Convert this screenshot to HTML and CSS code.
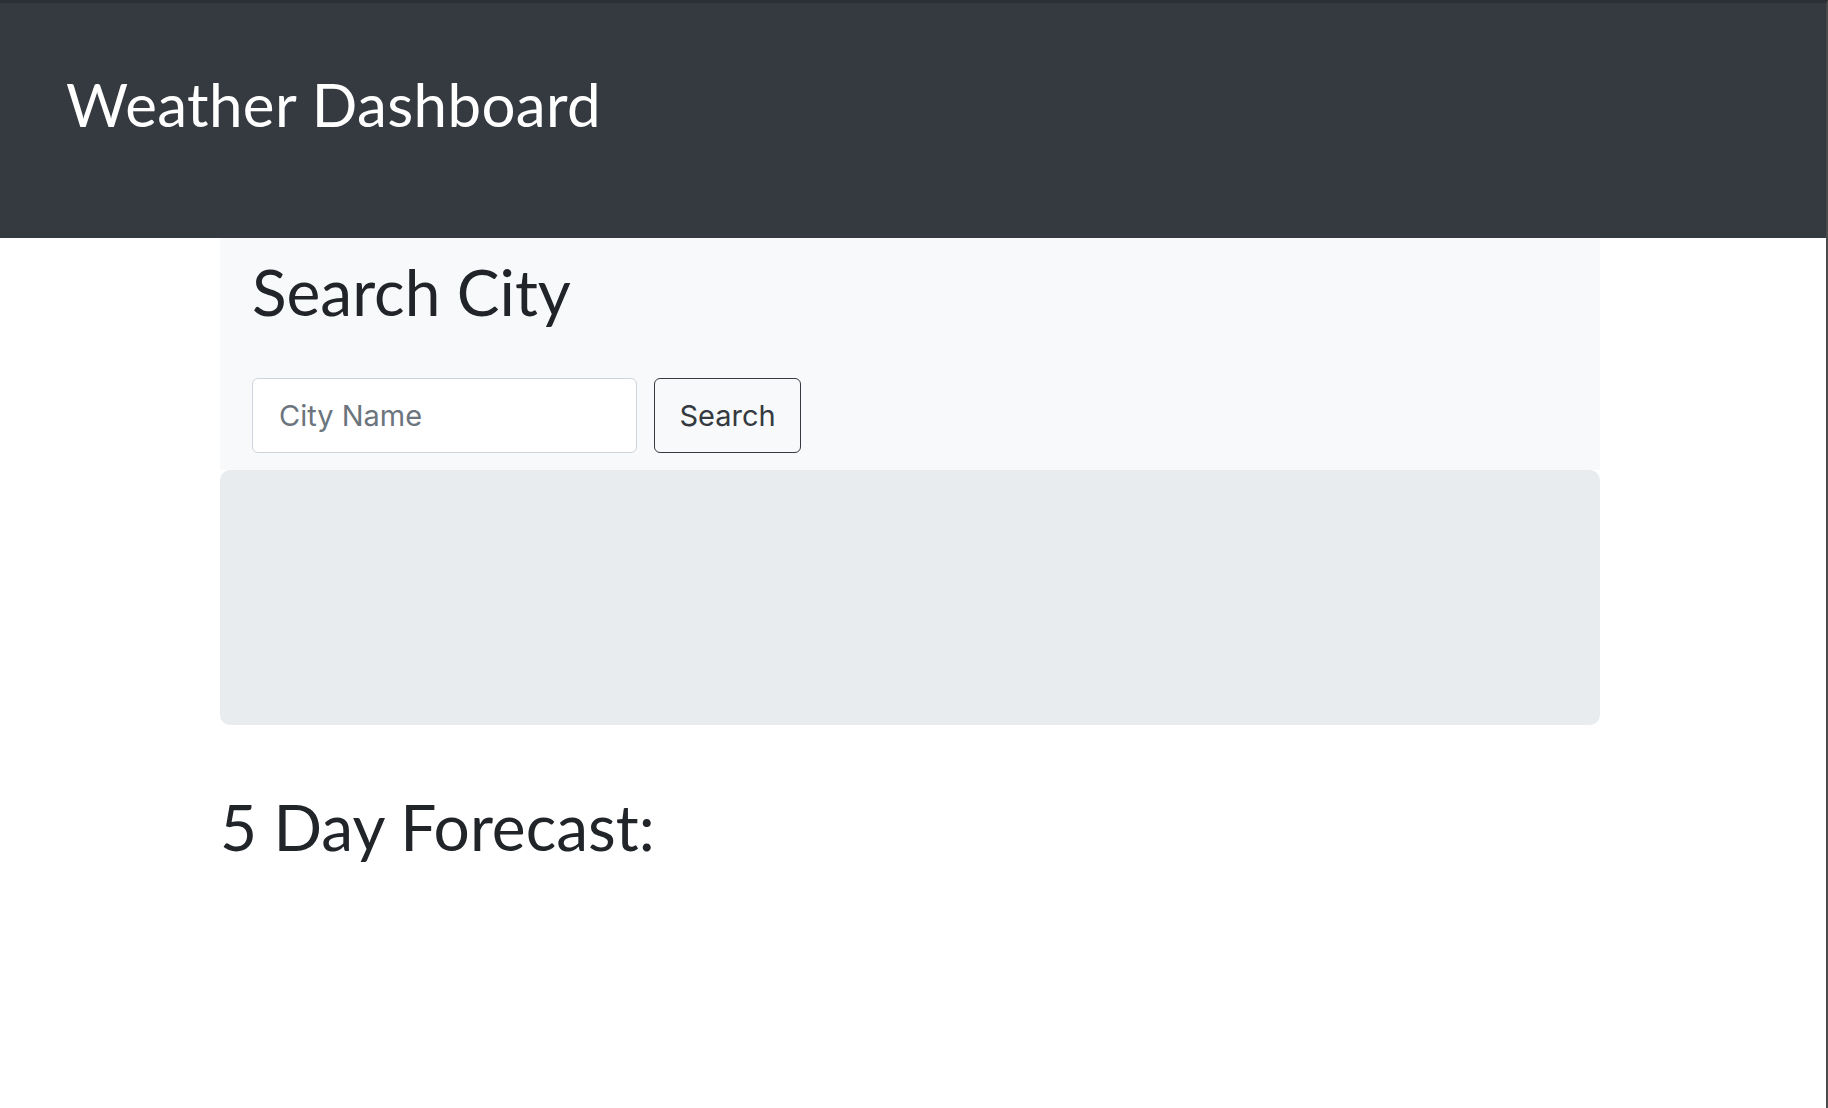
FILE: index.html
```html
<!DOCTYPE html>
<html lang="en">
<head>
<meta charset="utf-8">
<title>Weather Dashboard</title>
<link rel="stylesheet" href="styles.css">
</head>
<body>
<div class="frame">
  <header class="jumbo">
    <h1 class="brand">Weather Dashboard</h1>
  </header>
  <main class="container">
    <section class="search-panel">
      <h2 class="panel-title">Search City</h2>
      <form class="search-form">
        <input class="city-input" type="text" placeholder="City Name">
        <button class="search-btn" type="button">Search</button>
      </form>
    </section>
    <section class="current-box"></section>
    <h2 class="forecast-title">5 Day Forecast:</h2>
  </main>
</div>
</body>
</html>
```

FILE: styles.css
```css
html, body {
  margin: 0;
  padding: 0;
  background: #ffffff;
}

body {
  font-family: Lato, "Liberation Sans", sans-serif;
  color: #212529;
}

.frame {
  box-sizing: border-box;
  min-height: 100vh;
  border-top: 3px solid #2b2f33;
  border-right: 2px solid #4a4a4a;
}

.jumbo {
  background: #343a40;
  height: 235px;
  box-sizing: border-box;
  padding: 65px 0 0 66px;
}

.brand {
  margin: 0;
  font-weight: 400;
  font-size: 60px;
  letter-spacing: 0.4px;
  line-height: 1.2;
  color: #ffffff;
}

.container {
  width: 1380px;
  margin-left: 220px;
}

.search-panel {
  background: #f8f9fa;
  padding: 16px 32px 17px;
}

.panel-title {
  margin: 0 0 47px;
  font-weight: 400;
  font-size: 64px;
  line-height: 1.2;
}

.search-form {
  display: flex;
  gap: 17px;
  margin: 0;
}

.city-input {
  box-sizing: border-box;
  width: 385px;
  height: 75px;
  padding: 0 0 0 26px;
  border: 1px solid #ced4da;
  border-radius: 6px;
  background: #ffffff;
  font-family: Inter, "Liberation Sans", sans-serif;
  font-size: 29px;
  color: #495057;
}

.city-input::placeholder {
  color: #6c757d;
}

.search-btn {
  box-sizing: border-box;
  width: 147px;
  height: 75px;
  padding: 0;
  border: 1px solid #343a40;
  border-radius: 6px;
  background: transparent;
  font-family: Inter, "Liberation Sans", sans-serif;
  font-size: 29px;
  color: #343a40;
}

.current-box {
  height: 255px;
  background: #e9ecef;
  border-radius: 10px;
}

.forecast-title {
  margin: 64px 0 0;
  font-weight: 400;
  font-size: 64px;
  line-height: 1.2;
}
```
